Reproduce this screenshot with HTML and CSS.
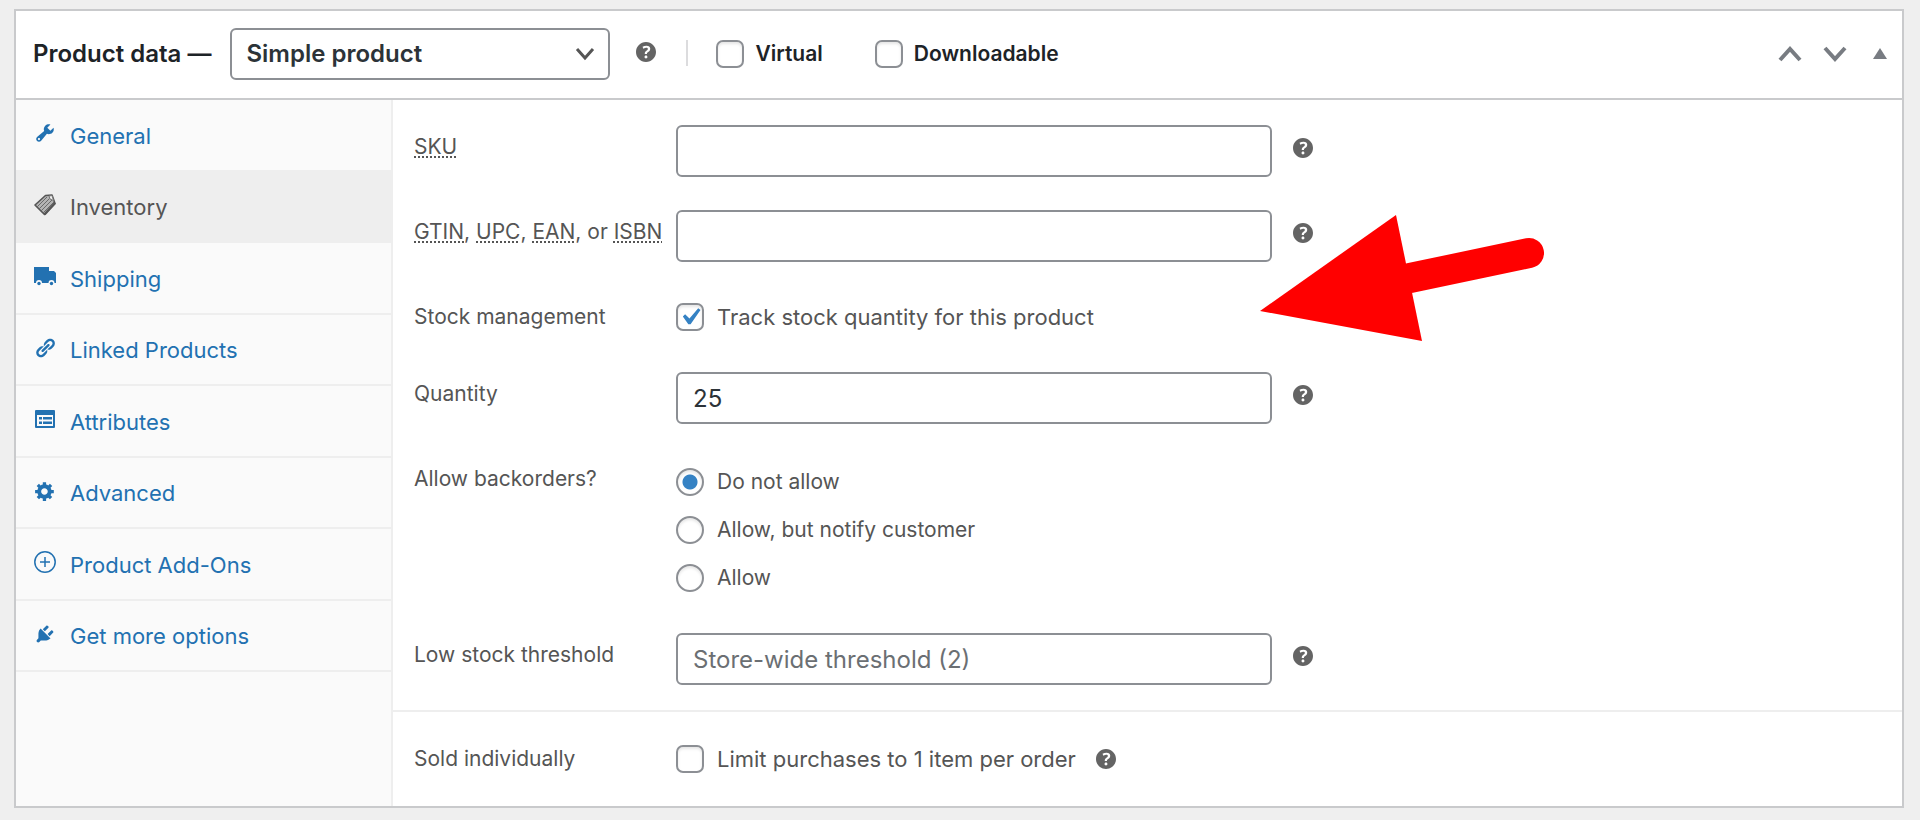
FILE: index.html
```html
<!DOCTYPE html>
<html lang="en">
<head>
  <meta charset="UTF-8">
  <meta name="viewport" content="width=device-width, initial-scale=1.0">
  <title>Product data</title>
  <link rel="stylesheet" href="styles.css">
</head>
<body>
  <!-- Shared icons -->
  <svg class="sprite" aria-hidden="true">
    <symbol id="icon-help" viewBox="3 3 14 14">
      <path d="M17 10c0-3.87-3.14-7-7-7-3.87 0-7 3.13-7 7s3.13 7 7 7c3.86 0 7-3.13 7-7zm-6.3 1.48H9.14v-.43c0-.38.08-.7.24-.98s.46-.57.88-.89c.41-.29.68-.53.81-.71.14-.18.2-.39.2-.62 0-.25-.09-.44-.28-.58-.19-.13-.45-.19-.79-.19-.58 0-1.25.19-2 .57l-.64-1.28c.87-.49 1.8-.74 2.77-.74.81 0 1.45.2 1.92.58.48.39.71.91.71 1.55 0 .43-.09.8-.29 1.11-.19.32-.57.67-1.11 1.06-.38.28-.61.49-.71.63-.1.15-.15.34-.15.57v.35zm-1.47 2.74c-.18-.17-.27-.42-.27-.73 0-.33.08-.58.26-.75s.43-.25.77-.25c.32 0 .57.09.75.26s.27.42.27.74c0 .3-.09.55-.27.72-.18.18-.43.27-.75.27-.33 0-.58-.09-.76-.26z"/>
    </symbol>
  </svg>

  <main class="postbox">
    <header class="postbox-header">
      <h2 class="title"><label for="product-type">Product data —</label></h2>
      <select id="product-type" class="type-select">
        <option>Simple product</option>
        <option>Grouped product</option>
        <option>Variable product</option>
      </select>
      <button type="button" class="help" aria-label="Help"><svg><use href="#icon-help"/></svg></button>
      <div class="type-options">
        <label class="type-option"><input type="checkbox" class="check"> Virtual</label>
        <label class="type-option"><input type="checkbox" class="check"> Downloadable</label>
      </div>
      <div class="handle-actions">
        <button type="button" class="handle" aria-label="Move up">
          <svg viewBox="0 0 24 24"><path d="M2 18L12 7l10 11" fill="none" stroke="currentColor" stroke-width="4"/></svg>
        </button>
        <button type="button" class="handle" aria-label="Move down">
          <svg viewBox="0 0 24 24"><path d="M2 6l10 11L22 6" fill="none" stroke="currentColor" stroke-width="4"/></svg>
        </button>
        <button type="button" class="handle" aria-label="Toggle panel">
          <svg viewBox="0 0 24 24"><path d="M5 17L12 6l7 11z" fill="currentColor"/></svg>
        </button>
      </div>
    </header>

    <div class="panel-wrap">
      <nav class="sidebar">
        <ul class="tabs">
          <li><a href="#" class="tab">
            <svg viewBox="0 0 20 20"><path d="M16.68 9.77c-1.34 1.34-3.3 1.67-4.95.99l-5.41 6.52c-.99.99-2.59.99-3.58 0s-.99-2.59 0-3.57l6.52-5.42c-.68-1.65-.35-3.61.99-4.95 1.28-1.28 3.12-1.62 4.72-1.06l-2.89 2.89 2.82 2.82 2.86-2.87c.53 1.58.18 3.39-1.08 4.65zM3.81 16.21c.4.39 1.04.39 1.43 0 .4-.4.4-1.04 0-1.43-.39-.4-1.03-.4-1.43 0-.39.39-.39 1.03 0 1.43z"/></svg>
            General</a></li>
          <li><a href="#" class="tab active">
            <svg viewBox="0 0 22 22"><path d="M11.5 1.5L18 1l3 8.500L10.500 20.500 1 11z" fill="#b4b4b4" stroke="#555" stroke-width="1.600" stroke-linejoin="round"/><path d="M3 13l10-10M5 15l10.500-10.500M7 17l11-11M9 19L20 8" fill="none" stroke="#6a6a6a"/><path d="M15 2l3-.5 1.500 5L16 5z" fill="#eee" stroke="#777"/><path d="M21 9L10.500 20.500" stroke="#555" stroke-width="2.500"/></svg>
            Inventory</a></li>
          <li><a href="#" class="tab">
            <svg viewBox="0 0 22 22"><path d="M0 2h15v4h5l2 2v10h-1.500a3 3 0 0 0-6 0H8a3 3 0 0 0-6 0H0z"/><circle cx="5" cy="18.500" r="1.700"/><circle cx="17.500" cy="18.500" r="1.700"/></svg>
            Shipping</a></li>
          <li><a href="#" class="tab">
            <svg viewBox="0 0 20 20"><path d="M17.740 2.760c1.680 1.690 1.680 4.410 0 6.100l-1.530 1.520c-1.120 1.120-2.700 1.470-4.140 1.090l2.620-2.610.760-.770.760-.760c.840-.840.840-2.200 0-3.040-.840-.850-2.200-.850-3.040 0l-.770.760-3.380 3.380c-.370-1.440-.020-3.020 1.100-4.140l1.520-1.530c1.690-1.680 4.420-1.680 6.100 0zM8.590 13.430l5.340-5.340c.420-.420.420-1.100 0-1.520-.440-.430-1.130-.390-1.530 0l-5.330 5.340c-.420.420-.420 1.100 0 1.520.440.430 1.130.390 1.520 0zm-.760 2.290l4.140-4.150c.380 1.440.030 3.020-1.090 4.140l-1.520 1.530c-1.690 1.680-4.410 1.680-6.100 0-1.680-1.680-1.680-4.420 0-6.100l1.530-1.520c1.120-1.120 2.700-1.470 4.140-1.100l-4.140 4.150c-.850.840-.850 2.200 0 3.050.840.840 2.200.840 3.040 0z"/></svg>
            Linked Products</a></li>
          <li><a href="#" class="tab">
            <svg viewBox="0 0 22 22"><path fill-rule="evenodd" d="M2 2h18a1 1 0 0 1 1 1v16a1 1 0 0 1-1 1H2a1 1 0 0 1-1-1V3a1 1 0 0 1 1-1zM3 7v11h16V7zM5 9h3v2.500H5zM9 9h9v2.500H9zM5 13.500h3V16H5zM9 13.500h9V16H9z"/></svg>
            Attributes</a></li>
          <li><a href="#" class="tab">
            <svg viewBox="0 0 20 20"><path d="M18 12h-2.180c-.170.700-.440 1.350-.810 1.930l1.540 1.540-2.100 2.100-1.540-1.540c-.580.360-1.230.630-1.910.790V19H8v-2.180c-.680-.160-1.330-.430-1.910-.790l-1.540 1.540-2.120-2.120 1.540-1.540c-.360-.580-.630-1.230-.790-1.910H1V9.030h2.170c.160-.700.440-1.350.800-1.940L2.430 5.550l2.100-2.100 1.540 1.540c.580-.370 1.240-.640 1.930-.810V2h3v2.180c.680.160 1.330.430 1.910.790l1.540-1.540 2.120 2.120-1.540 1.540c.360.590.640 1.240.800 1.940H18V12zm-8.500 1.500c1.660 0 3-1.340 3-3s-1.340-3-3-3-3 1.340-3 3 1.340 3 3 3z"/></svg>
            Advanced</a></li>
          <li><a href="#" class="tab">
            <svg viewBox="0 0 22 22"><path d="M11 6v10M6 11h10" stroke="currentColor" stroke-width="1.500"/><circle cx="11" cy="11" r="10.200" fill="none" stroke="currentColor" stroke-width="1.500"/></svg>
            Product Add-Ons</a></li>
          <li><a href="#" class="tab">
            <svg viewBox="0 0 20 20"><path d="M13.110 4.360L9.870 7.600 8 5.730l3.240-3.240c.350-.340 1.050-.200 1.560.320.520.510.660 1.210.310 1.550zm-8 1.770l.910-1.120 9.010 9.010-1.190.840c-.710.710-2.630 1.160-3.820 1.160H6.140L4.900 17.260c-.590.590-1.540.590-2.120 0-.590-.580-.590-1.530 0-2.120l1.240-1.240v-3.880c0-1.130.400-3.190 1.090-3.890zm7.260 3.970l3.240-3.240c.340-.350 1.040-.210 1.550.310.520.510.660 1.210.310 1.550l-3.240 3.250z"/></svg>
            Get more options</a></li>
        </ul>
      </nav>

      <form class="options">
        <div class="group">
          <div class="field">
            <label class="name" for="sku"><abbr>SKU</abbr></label>
            <div class="control">
              <input type="text" id="sku" class="text">
              <button type="button" class="help" aria-label="Help"><svg><use href="#icon-help"/></svg></button>
            </div>
          </div>
          <div class="field">
            <label class="name" for="gtin"><abbr>GTIN</abbr>, <abbr>UPC</abbr>, <abbr>EAN</abbr>, or <abbr>ISBN</abbr></label>
            <div class="control">
              <input type="text" id="gtin" class="text">
              <button type="button" class="help" aria-label="Help"><svg><use href="#icon-help"/></svg></button>
            </div>
          </div>
          <div class="field">
            <label class="name" for="manage-stock">Stock management</label>
            <div class="choices">
              <label class="choice"><input type="checkbox" id="manage-stock" class="check" checked> Track stock quantity for this product</label>
            </div>
          </div>
          <div class="field">
            <label class="name" for="quantity">Quantity</label>
            <div class="control">
              <input type="text" id="quantity" class="text" value="25">
              <button type="button" class="help" aria-label="Help"><svg><use href="#icon-help"/></svg></button>
            </div>
          </div>
          <div class="field" role="radiogroup" aria-labelledby="backorders">
            <span class="name" id="backorders">Allow backorders?</span>
            <div class="choices radios">
              <label class="choice small"><input type="radio" name="backorders" class="radio" checked> Do not allow</label>
              <label class="choice small"><input type="radio" name="backorders" class="radio"> Allow, but notify customer</label>
              <label class="choice small"><input type="radio" name="backorders" class="radio"> Allow</label>
            </div>
          </div>
          <div class="field">
            <label class="name" for="low-stock">Low stock threshold</label>
            <div class="control">
              <input type="text" id="low-stock" class="text" placeholder="Store-wide threshold (2)">
              <button type="button" class="help" aria-label="Help"><svg><use href="#icon-help"/></svg></button>
            </div>
          </div>
        </div>

        <div class="group">
          <div class="field">
            <label class="name" for="sold-individually">Sold individually</label>
            <div class="choices inline">
              <label class="choice"><input type="checkbox" id="sold-individually" class="check"> Limit purchases to 1 item per order</label>
              <button type="button" class="help" aria-label="Help"><svg><use href="#icon-help"/></svg></button>
            </div>
          </div>
        </div>

        <!-- Pointer to the stock management row -->
        <svg class="pointer" viewBox="0 0 284 128" aria-hidden="true">
          <path d="M150 63l119-25" stroke="#f00" stroke-width="30" stroke-linecap="round"/>
          <path d="M0 96L136 0l26 126z" fill="#f00"/>
        </svg>
      </form>
    </div>
  </main>
</body>
</html>
```
FILE: styles.css
```css
* {
  box-sizing: border-box;
}

body {
  margin: 0;
  padding: 9px 16px 13px 14px;
  background: #efefef;
  color: #1d2327;
  font-family: Inter, "Liberation Sans", sans-serif;
  font-size: 21px;
}

button {
  padding: 0;
  border: none;
  background: none;
  cursor: pointer;
}

.sprite {
  position: absolute;
  width: 0;
  height: 0;
}

.postbox {
  border: 2px solid #c9cacc;
  background: #fff;
}

/* Header */
.postbox-header {
  display: flex;
  align-items: center;
  height: 89px;
  padding: 0 10px 2px 17px;
  border-bottom: 2px solid #c9cacc;
}

.title {
  margin: 0 19px 0 0;
  font-size: 24px;
  font-weight: 600;
  line-height: 28px;
}

.type-select {
  width: 380px;
  height: 52px;
  padding: 0 14px;
  border: 2px solid #8c8f94;
  border-radius: 6px;
  appearance: none;
  background: #fff url("data:image/svg+xml,%3Csvg xmlns='http://www.w3.org/2000/svg' viewBox='0 0 20 14'%3E%3Cpath d='M2 2l8 9 8-9' fill='none' stroke='%23555' stroke-width='3'/%3E%3C/svg%3E") no-repeat right 13px center / 20px 14px;
  color: #2c3338;
  font: 600 24px Inter, "Liberation Sans", sans-serif;
}

.help {
  width: 20px;
  height: 20px;
  color: #646464;
}

.help svg {
  display: block;
  width: 20px;
  height: 20px;
  fill: currentColor;
}

.postbox-header .help {
  margin: 0 30px 4px 26px;
}

.type-options {
  display: flex;
  gap: 52px;
  position: relative;
  padding-left: 30px;
}

.type-options::before {
  content: "";
  position: absolute;
  left: 0;
  width: 2px;
  height: 26px;
  background: #dcdcde;
}

.type-option {
  display: flex;
  align-items: center;
  gap: 11px;
  font-weight: 600;
}

.handle-actions {
  display: flex;
  gap: 21px;
  margin-left: auto;
}

.handle {
  width: 24px;
  height: 24px;
  color: #787c82;
}

.handle svg {
  display: block;
}

/* Tabs */
.panel-wrap {
  display: flex;
}

.sidebar {
  flex: none;
  width: 377px;
  border-right: 2px solid #eee;
  background: #fafafa;
}

.tabs {
  display: grid;
  grid-auto-rows: 1fr;
  height: 572px;
  margin: 0;
  padding: 0;
  list-style: none;
}

.tab {
  display: flex;
  align-items: center;
  gap: 14px;
  height: 100%;
  padding: 2px 18px 0;
  border-bottom: 2px solid #eee;
  color: #2271b1;
  font-size: 22px;
  text-decoration: none;
}

.tab svg {
  width: 22px;
  height: 22px;
  margin-bottom: 5px;
  fill: currentColor;
}

.tab.active {
  background: #eee;
  color: #555;
}

/* Form */
.options {
  position: relative;
  flex: 1;
}

.group {
  display: flex;
  flex-direction: column;
  gap: 33px;
  padding: 25px 35px 25px 21px;
}

.group + .group {
  border-top: 2px solid #eee;
}

.field {
  display: grid;
  grid-template-columns: 262px 1fr;
  color: #555;
}

.name {
  line-height: 44px;
  white-space: nowrap;
}

abbr {
  text-decoration: underline dotted 2px;
  text-underline-offset: 2px;
}

.control {
  display: flex;
  gap: 21px;
}

.control .help {
  margin-top: 13px;
}

.text {
  width: 50%;
  height: 52px;
  padding: 0 15px;
  border: 2px solid #8c8f94;
  border-radius: 6px;
  color: #2c3338;
  font: 24px Inter, "Liberation Sans", sans-serif;
}

.text::placeholder {
  color: #6b6f73;
}

.choices {
  display: flex;
  flex-direction: column;
  gap: 20px;
  padding: 8px 0;
}

.choices.radios {
  padding-top: 11px;
}

.choices.inline {
  flex-direction: row;
  align-items: center;
}

.choice {
  display: flex;
  align-items: center;
  gap: 13px;
  font-size: 22px;
  line-height: 28px;
}

.choice.small {
  font-size: 21px;
}

.check,
.radio {
  flex: none;
  width: 28px;
  height: 28px;
  margin: 0;
  border: 2px solid #8c8f94;
  border-radius: 7px;
  appearance: none;
  background: #fff;
  box-shadow: inset 0 2px 3px rgba(0, 0, 0, 0.1);
}

.check:checked {
  background: #fff url("data:image/svg+xml,%3Csvg xmlns='http://www.w3.org/2000/svg' viewBox='0 0 20 20'%3E%3Cpath d='M14.83 4.89l1.34.94-5.81 8.38H9.02L5.78 9.67l1.34-1.25 2.57 2.4z' fill='%233582c4'/%3E%3C/svg%3E") no-repeat center / 34px 34px;
}

.radio {
  border-radius: 50%;
}

.radio:checked {
  background: radial-gradient(circle, #3582c4 7px, #fff 8px);
}

.pointer {
  position: absolute;
  top: 115px;
  left: 867px;
  width: 284px;
  height: 128px;
}
```
